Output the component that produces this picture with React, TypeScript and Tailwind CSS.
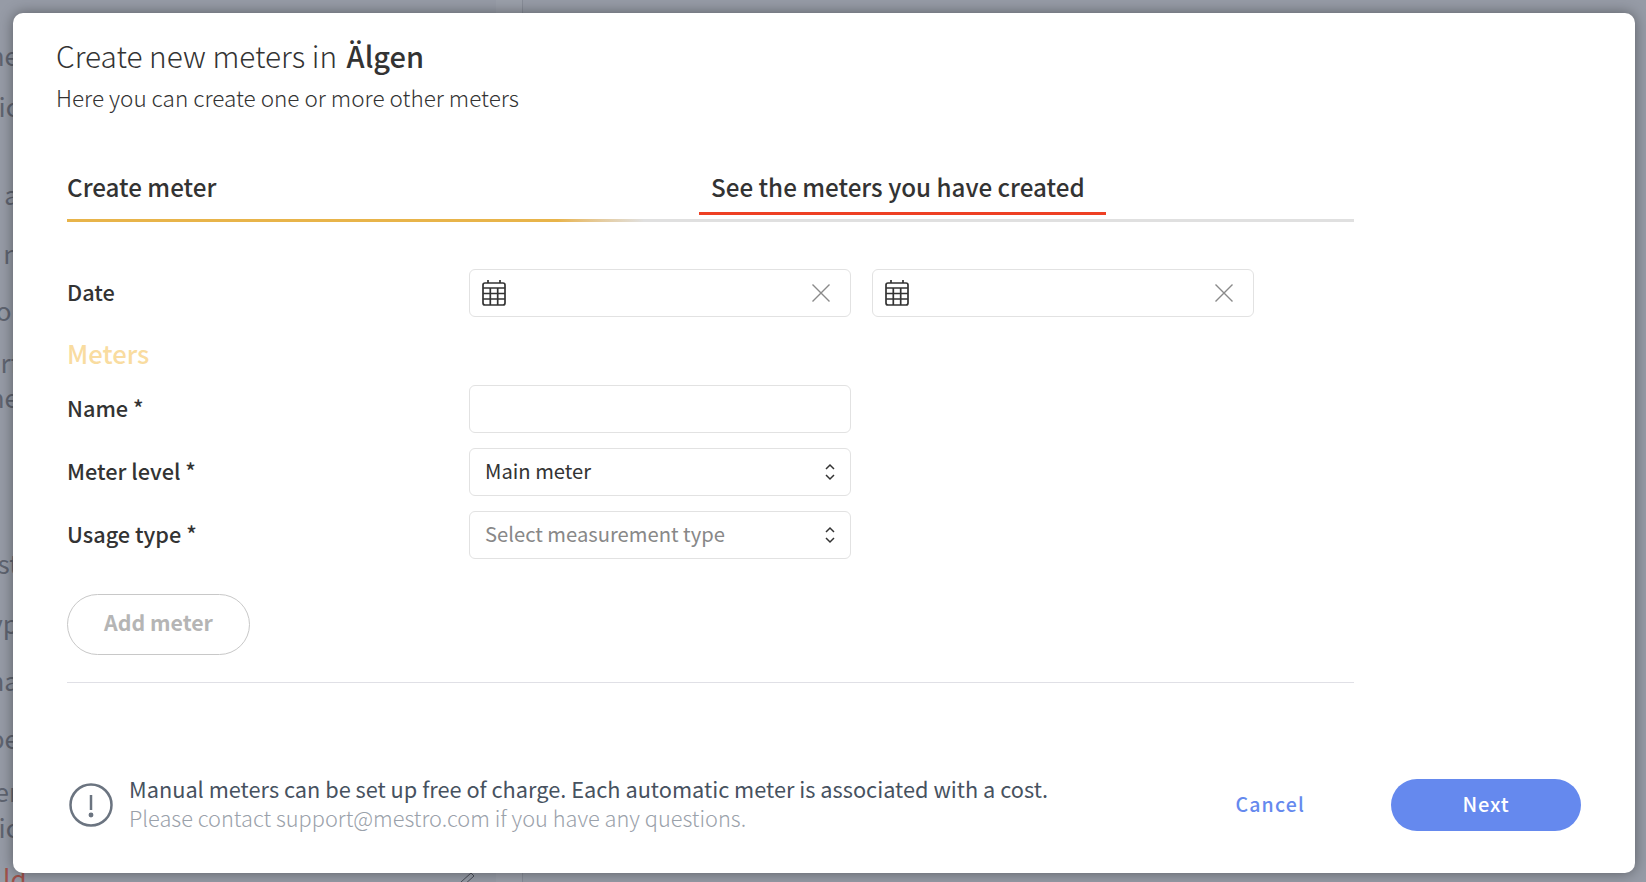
import React from 'react';

const fontStack = { fontFamily: '"Noto Sans CJK JP", "Noto Sans", sans-serif' };

// what can be seen of the page behind the dialog
const ghostRows = [
  { t: 'he', top: 39 },
  { t: 'ic', top: 90 },
  { t: 'a', top: 178 },
  { t: 'n', top: 237 },
  { t: 'ol', top: 294 },
  { t: 'rf', top: 346 },
  { t: 'he', top: 381 },
  { t: 'st', top: 547 },
  { t: 'yp', top: 607 },
  { t: 'na', top: 664 },
  { t: 'pe', top: 722 },
  { t: 'er', top: 775 },
  { t: 'ic', top: 811 },
];

const CalendarIcon: React.FC = () => (
  <svg width="24" height="28" viewBox="0 0 24 28" fill="none" stroke="#333" strokeWidth="1.7">
    <rect x="1" y="4" width="22" height="22" rx="2" />
    <path d="M6 1v3M18 1v3M1 9h22M1 14.5h22M1 20h22M8.3 9V26M15.7 9V26" />
  </svg>
);

const ClearIcon: React.FC = () => (
  <svg width="20" height="20" viewBox="0 0 20 20" fill="none" stroke="#8a8a8a" strokeWidth="1.4">
    <path d="M1.5 1.5l17 17M18.5 1.5l-17 17" />
  </svg>
);

const UpDownIcon: React.FC = () => (
  <svg width="12" height="18" viewBox="0 0 12 18" fill="none" stroke="#333" strokeWidth="1.5">
    <path d="M2 6l4-4 4 4M2 12l4 4 4-4" />
  </svg>
);

const DateInput: React.FC = () => (
  <div className="w-[382px] h-12 border border-[#e2e2e2] rounded-md flex items-center justify-between pl-3 pr-[19px]">
    <CalendarIcon />
    <ClearIcon />
  </div>
);

const SelectBox: React.FC<{ text: string; muted?: boolean }> = ({ text, muted }) => (
  <div className="w-[382px] h-12 border border-[#e2e2e2] rounded-md flex items-center justify-between pl-[15px] pr-[14px]">
    <span className={muted ? 'pb-[2px] text-[20.2px] text-[#888]' : 'pb-[2px] text-[20.2px] text-[#333]'}>{text}</span>
    <UpDownIcon />
  </div>
);

const Row: React.FC<{ label: string; children: React.ReactNode }> = ({ label, children }) => (
  <div className="flex items-center h-12">
    <div className="w-[402px] pb-[2px] text-[21.7px] font-medium text-[#333]">{label}</div>
    {children}
  </div>
);

export default function App() {
  return (
    <div className="relative w-[1646px] h-[882px] overflow-hidden bg-[#969ba6]" style={fontStack}>
      {/* page behind the dialog */}
      <div className="absolute left-[496px] top-0 bottom-0 w-[27px] bg-[#9a9fa9] border-r border-[#878c97]" />
      {ghostRows.map((r) => (
        <div
          key={r.top}
          className="absolute right-[1627px] text-[26px] leading-[32px] text-[#5f6470]"
          style={{ top: r.top }}
        >
          {r.t}
        </div>
      ))}
      <div className="absolute left-[3px] top-[862px] text-[26px] leading-[32px] text-[#a0524a]">ld</div>
      <svg className="absolute left-[460px] top-[870px]" width="22" height="12" viewBox="0 0 22 12" fill="none" stroke="#4a4e58" strokeWidth="1">
        <path d="M1 12L11 3l3 3L4 15M15 0l3 3" />
      </svg>

      <div className="absolute left-[13px] top-[13px] w-[1622px] h-[860px] bg-white rounded-[10px] shadow-[0_0_14px_rgba(0,0,0,0.4)] flex flex-col">
        <div className="pl-[43px] pt-[22px]">
          <h1 className="text-[29.75px] leading-[40px] font-light text-[#333]">
            Create new meters in <span className="ml-[3px] text-[29px] font-medium">Älgen</span>
          </h1>
          <p className="text-[22.5px] leading-[32px] font-light text-[#333] mt-[6px]">Here you can create one or more other meters</p>
        </div>

        <div className="ml-[54px] w-[1287px] mt-[49px]">
          <div className="relative h-[60px] border-b-[3px] border-[#e0e0e0]">
            <div className="absolute left-0 right-[710px] -bottom-[3px] h-[3px] bg-gradient-to-r from-[#e8b44a] from-[85%] to-[#e0e0e0]" />
            <div className="flex h-full">
              <div className="w-[632px] pt-[7px] text-[24.2px] font-medium text-[#333]">Create meter</div>
              <div className="w-[407px] h-[53px] border-b-[3px] border-[#ee4024] pt-[7px] pl-3 text-[24.2px] font-medium text-[#333]">
                See the meters you have created
              </div>
            </div>
          </div>

          <div className="mt-[47px]">
            <Row label="Date">
              <DateInput />
              <div className="w-[21px]" />
              <DateInput />
            </Row>
          </div>
          <div className="mt-[21px] text-[25.6px] leading-[30px] font-medium text-[#f9dca0]">Meters</div>
          <div className="mt-[17px] flex flex-col gap-[15px]">
            <Row label="Name *">
              <div className="w-[382px] h-12 border border-[#e2e2e2] rounded-md" />
            </Row>
            <Row label="Meter level *">
              <SelectBox text="Main meter" />
            </Row>
            <Row label="Usage type *">
              <SelectBox text="Select measurement type" muted />
            </Row>
          </div>
          <button className="mt-[35px] w-[183px] h-[61px] pb-[6px] rounded-full border border-[#c8c8c8] text-[21.3px] font-bold text-[#b5b5b5]">
            Add meter
          </button>
          <div className="mt-[27px] h-px bg-[#e0e0e6]" />
        </div>

        <div className="mt-[91px] pl-[56px] pr-[54px] flex items-center justify-between">
          <div className="flex items-center gap-[16px]">
            <svg width="44" height="44" viewBox="0 0 44 44" fill="none" stroke="#6b7480" strokeWidth="2.5">
              <circle cx="22" cy="22" r="20.5" />
              <path d="M22 12v15" />
              <circle cx="22" cy="32" r="1.2" fill="#6b7480" />
            </svg>
            <div className="pb-[3px]">
              <div className="text-[21.75px] leading-[29px] text-[#47525f]">
                Manual meters can be set up free of charge. Each automatic meter is associated with a cost.
              </div>
              <div className="text-[21.75px] leading-[29px] text-[#9aa1aa] font-light">
                Please contact support@mestro.com if you have any questions.
              </div>
            </div>
          </div>
          <div className="flex items-center gap-[86px]">
            <span className="text-[19.5px] pb-[1px] font-medium tracking-[1.2px] text-[#6589ee]">Cancel</span>
            <button className="w-[190px] h-[52px] pb-[1px] rounded-full bg-[#6589ee] text-white text-[20px] font-medium tracking-[0.8px]">
              Next
            </button>
          </div>
        </div>
      </div>
    </div>
  );
}
